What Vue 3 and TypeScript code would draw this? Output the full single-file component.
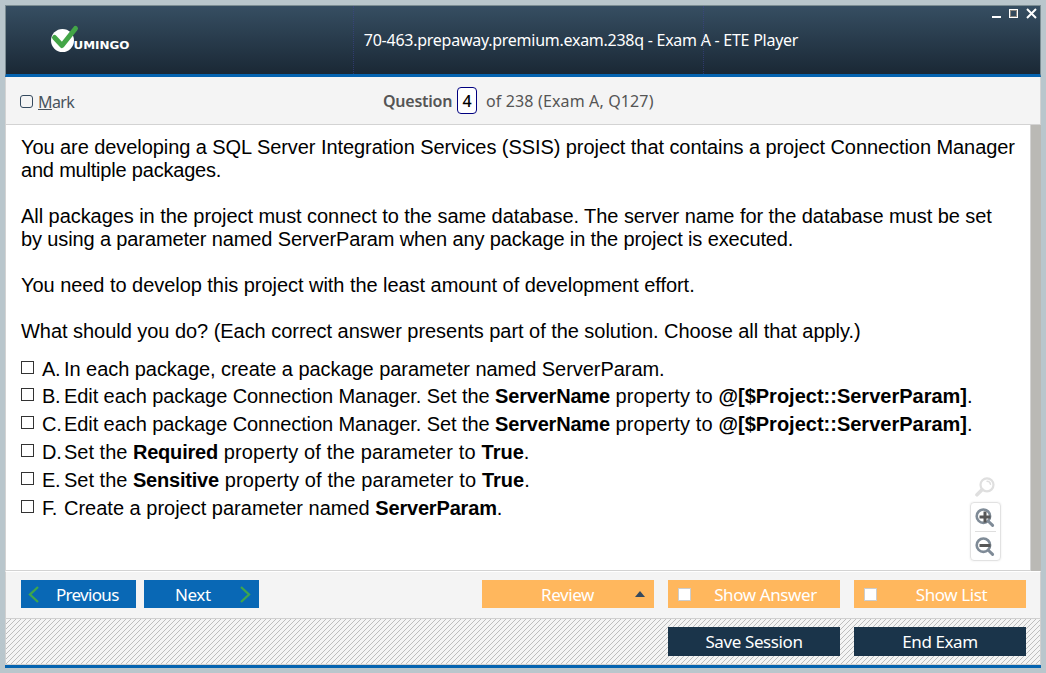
<script setup lang="ts">
interface Run { text: string; bold?: boolean; spacing?: string }
interface Line { text: string; spacing: string }
interface Choice { letter: string; runs: Run[] }

const lines: Line[] = [
  { text: 'You are developing a SQL Server Integration Services (SSIS) project that contains a project Connection Manager', spacing: '-0.067px' },
  { text: 'and multiple packages.', spacing: '-0.2px' },
  { text: '', spacing: '0px' },
  { text: 'All packages in the project must connect to the same database. The server name for the database must be set', spacing: '-0.056px' },
  { text: 'by using a parameter named ServerParam when any package in the project is executed.', spacing: '-0.125px' },
  { text: '', spacing: '0px' },
  { text: 'You need to develop this project with the least amount of development effort.', spacing: '-0.045px' },
  { text: '', spacing: '0px' },
  { text: 'What should you do? (Each correct answer presents part of the solution. Choose all that apply.)', spacing: '-0.04px' },
]

const connection: Run[] = [
  { text: 'Edit each package Connection Manager. Set the ', spacing: '-0.08px' },
  { text: 'ServerName', bold: true, spacing: '-0.2px' },
  { text: ' property to ', spacing: '0.15px' },
  { text: '@[$Project::ServerParam]', bold: true },
  { text: '.' },
]
const choices: Choice[] = [
  { letter: 'A.', runs: [{ text: 'In each package, create a package parameter named ServerParam.', spacing: '-0.05px' }] },
  { letter: 'B.', runs: connection },
  { letter: 'C.', runs: connection },
  { letter: 'D.', runs: [{ text: 'Set the ' }, { text: 'Required', bold: true, spacing: '-0.2px' }, { text: ' property of the parameter to ', spacing: '0.15px' }, { text: 'True', bold: true }, { text: '.' }] },
  { letter: 'E.', runs: [{ text: 'Set the ' }, { text: 'Sensitive', bold: true, spacing: '-0.2px' }, { text: ' property of the parameter to ', spacing: '0.13px' }, { text: 'True', bold: true }, { text: '.' }] },
  { letter: 'F.', runs: [{ text: 'Create a project parameter named ' }, { text: 'ServerParam', bold: true, spacing: '-0.18px' }, { text: '.' }] },
]
</script>

<template>
  <div class="desktop">
    <div class="window">
      <header class="titlebar">
        <svg class="logo" width="84" height="32" viewBox="0 0 84 32">
          <circle cx="12.5" cy="17.5" r="11.5" fill="#fff" />
          <path d="M4.5 14.5 L12 22.5 L25.5 5.5" fill="none" stroke="#43a547" stroke-width="5" stroke-linecap="round" stroke-linejoin="round" />
          <text x="23.5" y="26" class="brand" textLength="56" lengthAdjust="spacingAndGlyphs">UMINGO</text>
        </svg>
        <h1 class="title">70-463.prepaway.premium.exam.238q - Exam A - ETE Player</h1>
        <svg class="controls" width="47" height="11" viewBox="0 0 47 11" shape-rendering="crispEdges">
          <rect x="0" y="8" width="9" height="2" fill="#fff" />
          <rect x="17.5" y="1.5" width="8" height="8" fill="none" stroke="#fff" />
          <rect x="18.5" y="2.5" width="6" height="6" fill="none" stroke="#8b8780" />
          <path d="M35 1 L44 10 M44 1 L35 10" stroke="#fff" stroke-width="2" shape-rendering="auto" />
        </svg>
      </header>

      <div class="status">
        <label class="mark"><i class="markbox"></i><span><u>M</u>ark</span></label>
        <div class="counter"><b>Question</b><span class="number">4</span><span class="total">of 238 (Exam A, Q127)</span></div>
      </div>

      <main class="body">
        <section class="page">
          <div class="question">
            <div v-for="(l, i) in lines" :key="i" class="line"><span :style="{ letterSpacing: l.spacing }">{{ l.text }}</span></div>
          </div>
          <ul class="choices">
            <li v-for="c in choices" :key="c.letter">
              <i class="box"></i><span class="letter">{{ c.letter }}</span>
              <span class="answer"><span v-for="(r, i) in c.runs" :key="i" :class="{ strong: r.bold }" :style="{ letterSpacing: r.spacing }">{{ r.text }}</span></span>
            </li>
          </ul>
          <div class="zoomer">
            <svg width="20" height="20" viewBox="0 0 20 20" class="reset">
              <g fill="none" stroke="#dfdfdf" stroke-linecap="round"><circle cx="12" cy="7.8" r="6.5" stroke-width="2.2" /><path d="M7 12.8 L2 17.8" stroke-width="3.6" /><path d="M12 4.3 Q15 4.3 15.5 7.3" stroke-width="1.4" /></g>
            </svg>
            <div class="zoompanel">
              <svg width="20" height="20" viewBox="0 0 20 20"><g fill="none"><circle cx="8.4" cy="8.2" r="6.7" stroke="#7f8b97" stroke-width="2.6" /><path d="M13.3 13.2 L17.6 17.4" stroke="#7f8b97" stroke-width="3" stroke-linecap="round" /><path d="M4.5 9 H15.5 M10 3.5 V14.5" stroke="#575757" stroke-width="3" /></g></svg>
              <hr />
              <svg width="20" height="20" viewBox="0 0 20 20"><g fill="none"><circle cx="8.4" cy="8.2" r="6.7" stroke="#7f8b97" stroke-width="2.6" /><path d="M13.3 13.2 L17.6 17.4" stroke="#7f8b97" stroke-width="3" stroke-linecap="round" /><path d="M4.5 8.5 H15.5" stroke="#575757" stroke-width="3" /></g></svg>
            </div>
          </div>
        </section>
        <div class="scrollbar"></div>
      </main>

      <nav class="actions">
        <button class="btn blue"><svg width="12" height="18" viewBox="0 0 12 18"><path d="M10 2 L2 9.5 L10 17" /></svg><span class="prev">Previous</span></button>
        <button class="btn blue"><span class="next">Next</span><svg class="right" width="12" height="18" viewBox="0 0 12 18"><path d="M2 2 L10 9.5 L2 17" /></svg></button>
        <button class="btn orange first"><span class="review">Review</span><i class="caret"></i></button>
        <button class="btn orange"><i class="check"></i><span class="show">Show Answer</span></button>
        <button class="btn orange"><i class="check"></i><span class="show">Show List</span></button>
      </nav>

      <footer class="session">
        <svg class="hatch" width="100%" height="100%">
          <defs>
            <pattern id="hatch" width="5" height="5" patternUnits="userSpaceOnUse">
              <path d="M4 0h1v1h-1zM3 1h1v1h-1zM2 2h1v1h-1zM1 3h1v1h-1zM0 4h1v1h-1z" fill="#bdbdbd" />
            </pattern>
          </defs>
          <rect width="100%" height="100%" fill="url(#hatch)" />
        </svg>
        <button class="btn dark">Save Session</button>
        <button class="btn dark">End Exam</button>
      </footer>
    </div>
  </div>
</template>

<style>
html, body { margin: 0; background: #b9c6cc; overflow: hidden; }
</style>
<style scoped>
* { box-sizing: border-box; }
.desktop { width: 1046px; height: 673px; padding: 5px; background: #b9c6cc; font-family: "Noto Sans", "Open Sans", sans-serif; }
.window { width: 1036px; height: 663px; display: flex; flex-direction: column; border-bottom: 3px solid #0463b0; }
.titlebar { position: relative; height: 72px; flex: none; display: flex; justify-content: center; border: 1px solid #7c8d93; border-bottom: 3px solid #0463b0; background: linear-gradient(#364e62, #1a2835); }
.titlebar::before { content: ""; position: absolute; left: 347px; top: 0; bottom: 0; width: 349px; border: 0 dotted rgba(62, 67, 150, .55); border-width: 0 1px; }
.logo { position: absolute; left: 44px; top: 17px; }
.brand { font: bold 10.5px "DejaVu Sans", sans-serif; fill: #fff; }
.title { margin: 0 0 0 116px; padding-top: 22px; font: 16px/24px "Noto Sans", sans-serif; letter-spacing: -.26px; color: #fff; white-space: nowrap; width: 549px; text-align: center; }
.controls { position: absolute; right: 1px; top: 2px; }
.status { height: 48px; flex: none; display: flex; align-items: flex-start; background: #f4f4f4; border: solid #d3d3d3; border-width: 0 1px 1px; color: #555; font-size: 16px; }
.mark { display: flex; gap: 5px; width: 363px; padding: 14px 0 0 14px; line-height: 22px; color: #48535d; letter-spacing: -.6px; }
.markbox { width: 13px; height: 13px; margin-top: 4px; border: 1px solid #34495e; border-radius: 3px; }
.counter { display: flex; padding: 10px 0 0 14px; line-height: 28px; white-space: nowrap; }
.counter b { width: 74px; font-weight: 600; letter-spacing: -.25px; }
.number { width: 20px; height: 27px; border: 1px solid #000080; border-radius: 4px; background: #fff; color: #000; text-align: center; font-weight: 500; line-height: 27px; }
.total { margin-left: 9px; letter-spacing: .14px; }
.body { flex: 1; min-height: 0; display: flex; border-left: 1px solid #d3d3d3; background: #fff; }
.page { position: relative; flex: 1; padding: 11px 0 0 15px; border: solid #d3d3d3; border-width: 0 1px 1px 0; font-family: "Liberation Sans", Arial, sans-serif; font-size: 20px; color: #000; }
.scrollbar { width: 10px; background: #bab9b5; }
.line { height: 23px; line-height: 23px; white-space: pre; }
.choices { list-style: none; margin: 13px 0 0; padding: 0; }
.choices li { display: flex; height: 28px; line-height: 27px; white-space: pre; }
.choices li:first-child { height: 27px; }
.box { width: 13px; height: 13px; margin-top: 5px; border: 1px solid #333; }
.letter { width: 22px; margin-left: 8px; letter-spacing: -.3px; }
.strong { font-weight: bold; }
.zoomer { position: absolute; right: 29px; bottom: 9px; width: 32px; display: flex; flex-direction: column; align-items: center; }
.zoomer svg { display: block; }
.reset { margin-bottom: 5px; }
.zoompanel { width: 31px; height: 59px; border: 1px solid #e2e2e2; border-radius: 4px; padding: 5px 4px; box-shadow: 0 0 2px #e6e6e6; }
.zoompanel hr { margin: 3px 0 5px; border: 0; border-top: 1px solid #dedede; }
.actions { height: 48px; flex: none; display: flex; align-items: flex-start; padding: 8px 14px 0 15px; background: #f4f4f4; border: 1px solid #d0d0d0; border-top-color: #fff; }
.btn { height: 28px; margin: 0; border: 0; border-radius: 0; padding: 2px 0 0; font: 17px/26px "Noto Sans", sans-serif; color: #fff; display: flex; align-items: center; white-space: nowrap; letter-spacing: -.4px; }
.blue { width: 115px; background: #0968b5; margin-right: 8px; padding-left: 7px; }
.blue svg { margin-top: -3px; }
.blue path { fill: none; stroke: #3fa64c; stroke-width: 2.3; }
.prev { margin-left: 16px; letter-spacing: -.7px; }
.next { margin-left: 24px; width: 64px; text-align: left; }
.orange { width: 172px; margin-left: 14px; background: #ffb75d; position: relative; }
.orange.first { margin-left: auto; }
.review { width: 171px; text-align: center; }
.caret { position: absolute; right: 9px; top: 11px; border: solid transparent; border-width: 0 5px 6px; border-bottom-color: #34495e; }
.check { width: 13px; height: 13px; margin: 0 0 2px 10px; background: #fff; border: 1px solid #ccc; }
.show { flex: 1; text-align: center; }
.session { position: relative; height: 46px; flex: none; display: flex; gap: 14px; justify-content: flex-end; padding: 8px 14px 0 0; border: solid #d0d0d0; border-width: 0 1px 1px; background: #f4f4f4; }
.hatch { position: absolute; inset: 0; }
.dark { position: relative; width: 172px; height: 29px; padding-top: 1px; background: #1a344a; justify-content: center; }
</style>
